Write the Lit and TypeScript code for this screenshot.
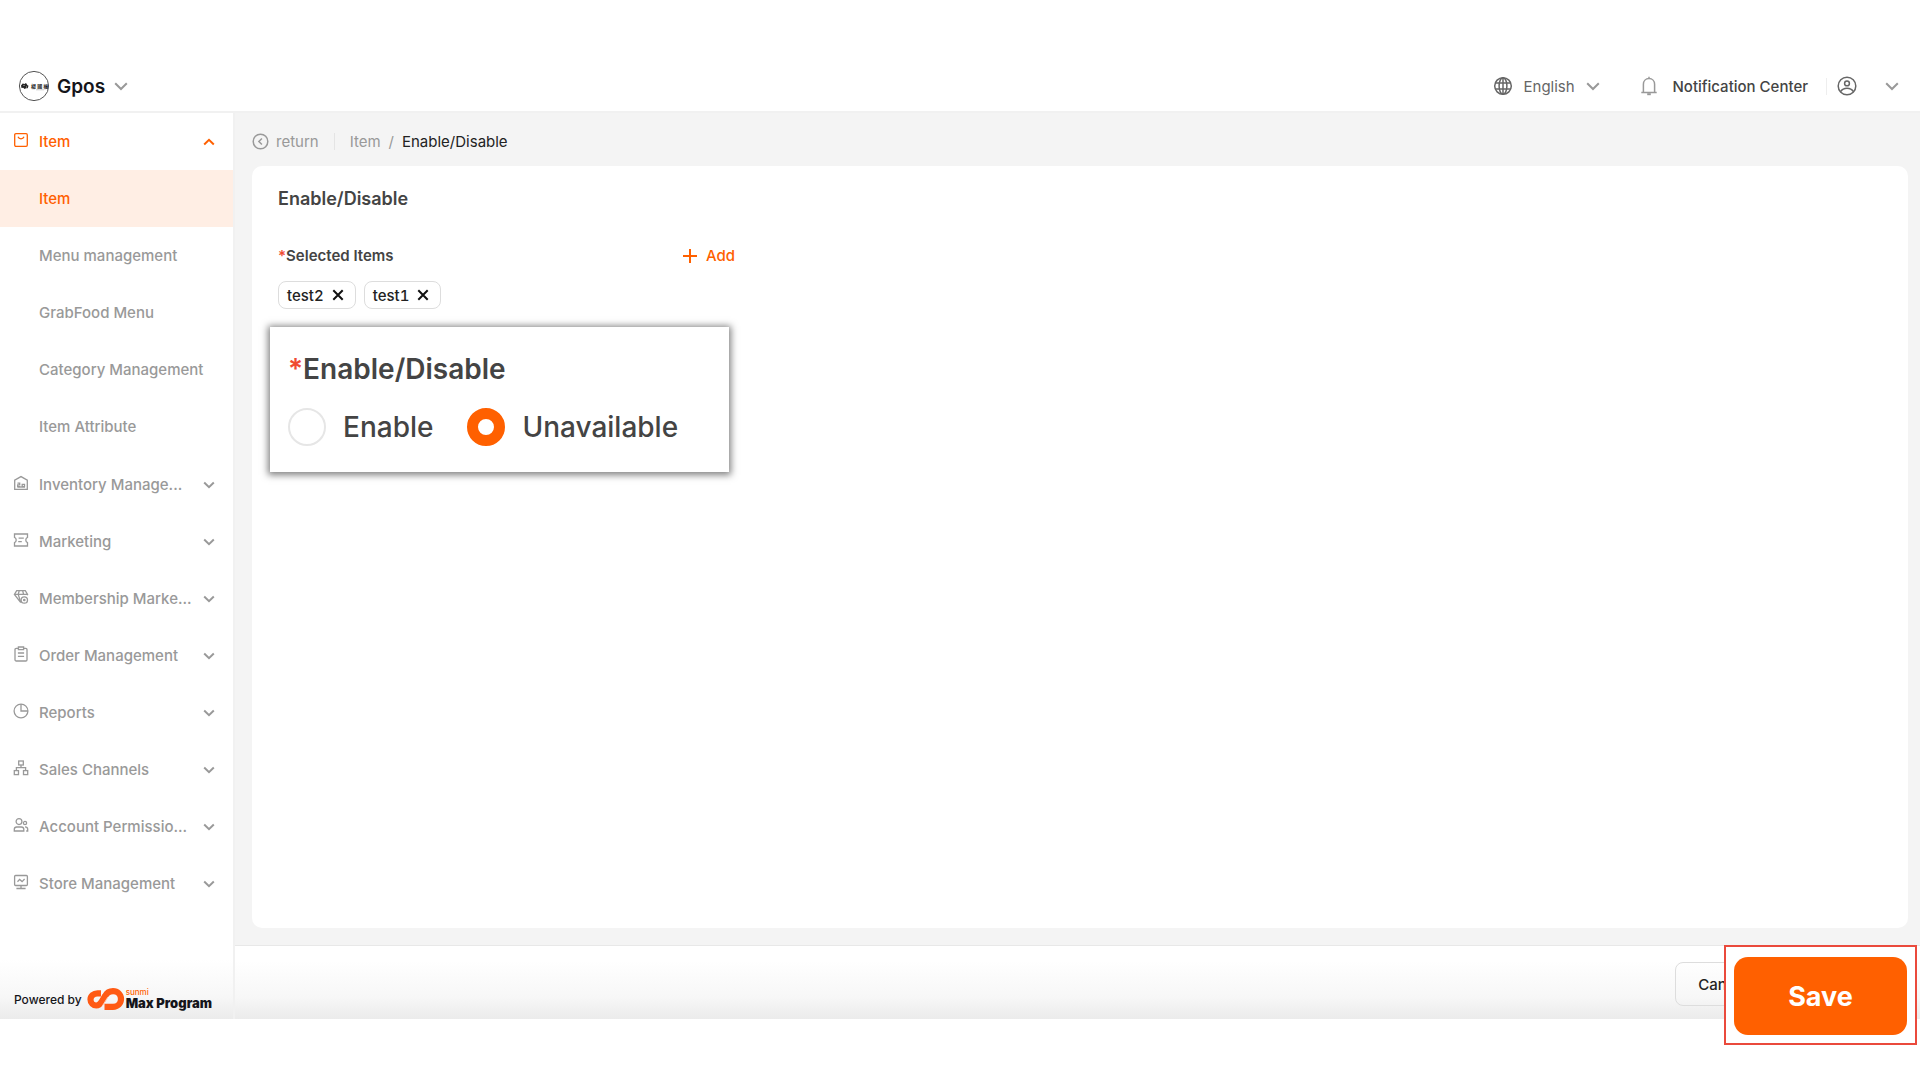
import { LitElement, html, css, svg, nothing } from "lit";
import { customElement, property } from "lit/decorators.js";

type Section = { label: string; icon: string; open?: boolean; children?: string[] };

const SECTIONS: Section[] = [
  {
    label: "Item",
    icon: "bag",
    open: true,
    children: ["Item", "Menu management", "GrabFood Menu", "Category Management", "Item Attribute"],
  },
  { label: "Inventory Manage...", icon: "warehouse" },
  { label: "Marketing", icon: "ticket" },
  { label: "Membership Marke...", icon: "diamond" },
  { label: "Order Management", icon: "clipboard" },
  { label: "Reports", icon: "pie" },
  { label: "Sales Channels", icon: "tree" },
  { label: "Account Permissio...", icon: "users" },
  { label: "Store Management", icon: "monitor" },
];

const GLYPHS: Record<string, unknown> = {
  bag: svg`<rect x="1.7" y="1.7" width="12.6" height="12.6" rx="1.2"/><path d="M5 4.8c.5 1.300 1.700 2 3 2s2.500-.7 3-2"/>`,
  warehouse: svg`<path d="M1.700 14.300V5.200L8 1.600l6.300 3.600v9.100z"/><path d="M4.500 8.200h2.200v1.700H4.700v1.700h2.600M9.200 11.600V9.400h2.300v2.200z"/><path d="M4.500 12h7.500"/>`,
  ticket: svg`<path d="M1.500 2h13v3.300c-1 .3-1.700 1.300-1.700 2.700s.7 2.400 1.700 2.700V14h-13v-3.300c1-.3 1.700-1.300 1.700-2.700s-.7-2.400-1.700-2.700z"/><path d="M5.600 6.200h5.200M5.200 9.600h3.600"/>`,
  diamond: svg`<path d="M7.800 13.600 1.400 5.400 3.700 1.700h8.600l2.300 3.700-.5.900M1.400 5.400h13.200M5.200 5.400l1-3.600M10.600 5.400l-.9-3.600M5.200 5.400l2.600 8"/><circle cx="11.300" cy="11" r="3.200"/><circle cx="11.300" cy="11" r=".7"/>`,
  clipboard: svg`<rect x="2" y="2.400" width="12" height="12.600" rx="1.200"/><path d="M5.400 1h5.200v2.600H5.400z" fill="#fff"/><path d="M4.900 7h6.200M4.900 10.300h6.200"/>`,
  pie: svg`<circle cx="8" cy="8" r="6.900"/><path d="M8 1.100V8h6.900"/>`,
  tree: svg`<rect x="5.700" y="1" width="4.600" height="4"/><rect x="1.300" y="10.600" width="4.200" height="4"/><rect x="10.500" y="10.600" width="4.200" height="4"/><path d="M8 5v2.700M3.400 10.600V7.700h9.200v2.900"/>`,
  users: svg`<circle cx="6" cy="4.600" r="2.900"/><circle cx="12" cy="6" r="1.600"/><path d="M1.300 14v-1.700c0-1.400 1-2.300 2.400-2.300h4.700c1.400 0 2.400.9 2.400 2.300V14zM12 9.800c1.600 0 2.700 1 2.700 2.500V14h-1.500"/>`,
  monitor: svg`<rect x="1.600" y="1.500" width="12.800" height="10" rx="1"/><path d="M4.500 7.700 6.600 5.400l2.500 2.200 2.500-2.600M8 11.500v2.700M3.400 14.500h9.200"/>`,
};

@customElement("chevron-icon")
export class ChevronIcon extends LitElement {
  @property({ type: Boolean }) up = false;
  @property({ type: Boolean }) large = false;
  static styles = css`
    :host { display: block; flex: none; width: 12px; height: 8px; }
    :host([large]) { width: 14px; height: 9px; }
    svg { display: block; width: 100%; height: 100%; fill: none; stroke: currentColor; stroke-width: 2; }
  `;
  render() {
    return this.large
      ? html`<svg viewBox="0 0 14 9" aria-hidden="true"><path d="M1.200 1.200 7 7l5.800-5.800" /></svg>`
      : html`<svg viewBox="0 0 12 8" aria-hidden="true">
          <path d=${this.up ? "M1.200 6.500 6 1.900l4.800 4.600" : "M1.200 1.500 6 6.100l4.800-4.600"} />
        </svg>`;
  }
}

@customElement("app-header")
export class AppHeader extends LitElement {
  static styles = css`
    :host {
      display: flex;
      align-items: center;
      justify-content: space-between;
      height: 50px;
      padding: 1px 21px 0 18px;
      border-bottom: 2px solid #f1f1f1;
      background: #fff;
      color: #999;
    }
    .store, .tools, .lang, .notice, .account { display: flex; align-items: center; }
    .logo { display: block; width: 32px; height: 32px; margin-right: 7px; }
    .logo text { font: 700 5px "Noto Sans CJK TC", sans-serif; }
    select {
      appearance: none;
      border: 0;
      margin: 0;
      padding: 0 24px 0 0;
      background: none;
      font: inherit;
      color: inherit;
      cursor: pointer;
    }
    chevron-icon { pointer-events: none; }
    .pick { display: flex; align-items: center; }
    .pick chevron-icon { margin-left: -16px; }
    .store .pick { font-size: 19px; font-weight: 600; }
    .store select { color: #15151a; }
    .lang { gap: 11px; font-size: 15px; }
    .lang select { padding-right: 26px; color: #666; }
    button {
      border: 0;
      padding: 0;
      background: none;
      font: inherit;
      color: inherit;
      cursor: pointer;
    }
    .notice { gap: 15px; margin-left: 40px; font-size: 15px; font-weight: 500; }
    .notice span { color: #444; }
    .account { gap: 28px; padding-left: 10px; }
    .rule { width: 1px; height: 17px; margin-left: 18px; background: #eee; }
    svg { display: block; fill: none; }
    .dark { stroke: #666; stroke-width: 1.500; }
    .bell { stroke: #999; stroke-width: 1.500; }
  `;
  render() {
    return html`
      <div class="store">
        <svg class="logo" viewBox="0 0 32 32" aria-hidden="true">
          <circle cx="16" cy="16" r="14.600" fill="#fff" stroke="#555" stroke-width="1" />
          <path d="M3 15.500l2-2.200 1 1 2-1.200 1.500 2.200 1 .5-.8 2.500H8l-1.500.7-1.200-1.200-1.800.3z" fill="#222" />
          <path d="M5.500 15.500h1M8 17h1" stroke="#fff" stroke-width=".7" />
          <text x="13" y="17.800" fill="#222">楊 國 福</text>
          <path d="M18 19.800h8" stroke="#aaa" stroke-width=".6" />
        </svg>
        <div class="pick">
          <select aria-label="Store"><option>Gpos</option></select>
          <chevron-icon large></chevron-icon>
        </div>
      </div>
      <div class="tools">
        <div class="lang">
          <svg class="dark" width="20" height="20" viewBox="0 0 20 20" aria-hidden="true">
            <circle cx="10" cy="10" r="8.300" />
            <ellipse cx="10" cy="10" rx="3.900" ry="8.300" />
            <path d="M2.400 7h15.200M2.400 13h15.200M10 1.700v16.600" />
          </svg>
          <div class="pick">
            <select aria-label="Language"><option>English</option></select>
            <chevron-icon large></chevron-icon>
          </div>
        </div>
        <button class="notice">
          <svg class="bell" width="18" height="20" viewBox="0 0 18 20" aria-hidden="true">
            <path d="M1.300 16.500h15.400M3.400 16.500V8.200C3.400 5 5.700 2.600 9 2.600s5.600 2.400 5.600 5.600v8.300M9 .8v1.800" />
            <path d="M7.200 18.200h3.600" stroke-width="2" />
          </svg>
          <span>Notification Center</span>
        </button>
        <div class="rule"></div>
        <button class="account" aria-label="Account">
          <svg class="dark" width="20" height="20" viewBox="0 0 20 20" aria-hidden="true">
            <circle cx="10" cy="10" r="8.800" />
            <circle cx="10" cy="7.400" r="2.400" />
            <path d="M3.600 15.600c1.400-2.300 3.600-3.400 6.400-3.400s5 1.100 6.400 3.400" />
          </svg>
          <chevron-icon large></chevron-icon>
        </button>
      </div>
    `;
  }
}

@customElement("side-nav")
export class SideNav extends LitElement {
  static styles = css`
    :host {
      display: flex;
      flex-direction: column;
      justify-content: space-between;
      flex: none;
      box-sizing: border-box;
      width: 235px;
      border-right: 2px solid #f1f1f1;
      background: #fff;
      color: #999;
      font-size: 15px;
      font-weight: 500;
    }
    ul { list-style: none; margin: 0; padding: 0; }
    .sub { padding-bottom: 1px; }
    .section {
      display: flex;
      align-items: center;
      box-sizing: border-box;
      width: 100%;
      height: 57px;
      border: 0;
      padding: 0 18px 0 13px;
      background: none;
      font: inherit;
      color: inherit;
      text-align: left;
      white-space: nowrap;
      cursor: pointer;
    }
    .section svg {
      display: block;
      width: 16px;
      height: 16px;
      margin: 0 10px 3px 0;
      fill: none;
      stroke: currentColor;
      stroke-width: 1.300;
    }
    .section span { flex: 1; }
    .section.open { color: #ff6000; }
    a {
      display: block;
      padding-left: 39px;
      line-height: 57px;
      color: inherit;
      text-decoration: none;
    }
    a.active { background: #ffeee4; color: #ff6000; }
    .powered {
      display: flex;
      align-items: center;
      gap: 5px;
      box-sizing: border-box;
      height: 74px;
      padding: 34px 0 0 14px;
      background: linear-gradient(#fff 20%, #f7f7f7 70%, #ebebeb);
      color: #15151a;
      font-size: 12px;
      white-space: nowrap;
    }
    .powered svg { display: block; }
    .brand { display: flex; align-items: center; gap: 1px; }
    .names { display: flex; flex-direction: column; }
    .maker { font-size: 8px; line-height: 8px; color: #ff6000; }
    .product { font-size: 13px; line-height: 15px; font-weight: 900; }
  `;
  render() {
    return html`
      <nav aria-label="Main">
        <ul>
          ${SECTIONS.map(
            (s) => html`<li>
              <button class="section ${s.open ? "open" : ""}" aria-expanded=${s.open ? "true" : "false"}>
                <svg viewBox="0 0 16 16" aria-hidden="true">${GLYPHS[s.icon]}</svg>
                <span>${s.label}</span>
                <chevron-icon ?up=${s.open} .up=${!!s.open}></chevron-icon>
              </button>
              ${s.children
                ? html`<ul class="sub">
                    ${s.children.map(
                      (c, i) => html`<li><a href="#" class=${i === 0 ? "active" : ""}>${c}</a></li>`
                    )}
                  </ul>`
                : nothing}
            </li>`
          )}
        </ul>
      </nav>
      <div class="powered">
        <span>Powered by</span>
        <div class="brand">
          <svg width="38" height="22" viewBox="0 0 38 22" aria-hidden="true" fill="none" stroke="#ff5a14">
            <path
              d="M14 5.300h-3.500c-4 0-7 2.600-7 6.200s2.800 6 5.800 6c2.600 0 4-1.500 5.400-3.800l3.600-6c1.700-3.100 4-4.500 7.700-4.500 4.600 0 8 3.400 8 7.800s-3.400 7.800-8 7.800h-8.500"
              stroke-width="6.200" />
            <path d="M20.800 9.200 15 18.500" stroke="#ffe3d4" stroke-width=".8" />
          </svg>
          <div class="names">
            <span class="maker">sunmi</span>
            <span class="product">Max Program</span>
          </div>
        </div>
      </div>
    `;
  }
}

@customElement("status-form")
export class StatusForm extends LitElement {
  @property({ attribute: false }) items = ["test2", "test1"];
  static styles = css`
    :host {
      display: block;
      flex: 1;
      margin: 0 12px 17px 17px;
      padding: 21px 18px;
      border-radius: 10px;
      background: #fff;
      color: #444;
      font-size: 15px;
    }
    h1 { margin: 0 8px 35px; font-size: 18px; line-height: 24px; font-weight: 600; }
    .row {
      display: flex;
      justify-content: space-between;
      align-items: center;
      max-width: 457px;
      margin: 0 8px;
      line-height: 20px;
      font-weight: 500;
    }
    .row h2 { margin: 0; font-size: 15px; font-weight: 600; }
    .req { color: #f04a32; }
    button { border: 0; padding: 0; background: none; font: inherit; cursor: pointer; }
    .add { display: flex; align-items: center; gap: 9px; color: #ff6000; }
    svg { display: block; fill: none; stroke: currentColor; stroke-width: 2; }
    .tags { display: flex; gap: 8px; margin: 15px 8px 18px; padding: 0; list-style: none; }
    .tags li {
      display: flex;
      align-items: center;
      gap: 8px;
      box-sizing: border-box;
      height: 28px;
      padding: 0 11px 0 8px;
      border: 1px solid #ddd;
      border-radius: 8px;
      color: #222;
      font-weight: 500;
      font-variant-numeric: tabular-nums;
    }
    .tags button { color: #111; }
    fieldset {
      box-sizing: border-box;
      max-width: 459px;
      margin: 0;
      padding: 25px 18px 26px;
      border: 0;
      background: #fff;
      box-shadow: 0 1px 7px 2px rgba(0, 0, 0, 0.5);
      font-size: 28px;
      font-weight: 500;
    }
    legend { float: left; width: 100%; margin-bottom: 22px; padding: 0; line-height: 34px; font-weight: 600; }
    .choices { display: flex; gap: 34px; clear: both; }
    label { display: flex; align-items: center; gap: 17px; line-height: 38px; }
    input {
      appearance: none;
      box-sizing: border-box;
      width: 38px;
      height: 38px;
      margin: 0;
      border: 2px solid #e6e6e6;
      border-radius: 50%;
      background: #fff;
    }
    input:checked { border: 11px solid #ff6000; }
  `;
  render() {
    return html`
      <h1>Enable/Disable</h1>
      <div class="row">
        <h2><span class="req">*</span>Selected Items</h2>
        <button class="add">
          <svg width="14" height="14" viewBox="0 0 14 14" aria-hidden="true"><path d="M7 0v14M0 7h14" /></svg>
          Add
        </button>
      </div>
      <ul class="tags">
        ${this.items.map(
          (t) => html`<li>
            ${t}
            <button aria-label="Remove ${t}">
              <svg width="12" height="12" viewBox="0 0 12 12" aria-hidden="true">
                <path d="M1.300 1.300l9.400 9.400M10.700 1.300l-9.400 9.400" />
              </svg>
            </button>
          </li>`
        )}
      </ul>
      <fieldset>
        <legend><span class="req">*</span>Enable/Disable</legend>
        <div class="choices">
          <label><input type="radio" name="status" value="on" />Enable</label>
          <label><input type="radio" name="status" value="off" checked />Unavailable</label>
        </div>
      </fieldset>
    `;
  }
}

@customElement("app-root")
export class AppRoot extends LitElement {
  static styles = css`
    :host {
      display: flex;
      flex-direction: column;
      box-sizing: border-box;
      min-height: 100vh;
      padding: 60px 0 61px;
      background: #fff;
      font-family: Inter, "Liberation Sans", sans-serif;
    }
    .body { display: flex; flex: 1; }
    main { display: flex; flex-direction: column; flex: 1; min-width: 0; background: #f4f4f4; }
    .crumbs {
      display: flex;
      align-items: center;
      height: 53px;
      padding: 4px 0 0 17px;
      box-sizing: border-box;
      margin: 0;
      font-size: 15px;
      color: #999;
    }
    .crumbs a { display: flex; align-items: center; gap: 7px; color: inherit; text-decoration: none; }
    .crumbs svg { display: block; fill: none; stroke: currentColor; stroke-width: 1.500; }
    .rule { width: 1px; height: 17px; margin: 0 15px; background: #e4e4e4; }
    .slash { margin: 0 8px; }
    .here { color: #222; }
    footer {
      display: flex;
      justify-content: flex-end;
      align-items: center;
      position: relative;
      box-sizing: border-box;
      height: 74px;
      padding: 3px 149px 0 0;
      border-top: 1px solid #e8e8e8;
      background: linear-gradient(#fff 20%, #f7f7f7 70%, #ebebeb);
    }
    button { font-family: inherit; cursor: pointer; }
    .cancel {
      height: 44px;
      padding: 0 22px;
      border: 1px solid #ddd;
      border-radius: 8px;
      background: none;
      font-size: 15px;
      font-weight: 500;
      color: #222;
    }
    .callout {
      position: absolute;
      top: -1px;
      right: 3px;
      padding: 10px 8px 8px;
      border: 2px solid #ea4a3c;
      background: #fff;
    }
    .save {
      display: block;
      width: 173px;
      height: 78px;
      border: 0;
      border-radius: 14px;
      background: #ff6000;
      color: #fff;
      font-size: 27px;
      font-weight: 700;
    }
  `;
  render() {
    return html`
      <app-header></app-header>
      <div class="body">
        <side-nav></side-nav>
        <main>
          <nav class="crumbs" aria-label="Breadcrumb">
            <a href="#">
              <svg width="17" height="17" viewBox="0 0 17 17" aria-hidden="true">
                <circle cx="8.500" cy="8.500" r="7.300" />
                <path d="M9.900 5.500 6.900 8.500l3 3" />
              </svg>
              return
            </a>
            <span class="rule"></span>
            <a href="#">Item</a>
            <span class="slash">/</span>
            <span class="here">Enable/Disable</span>
          </nav>
          <status-form></status-form>
          <footer>
            <button class="cancel">Cancel</button>
            <div class="callout"><button class="save">Save</button></div>
          </footer>
        </main>
      </div>
    `;
  }
}
